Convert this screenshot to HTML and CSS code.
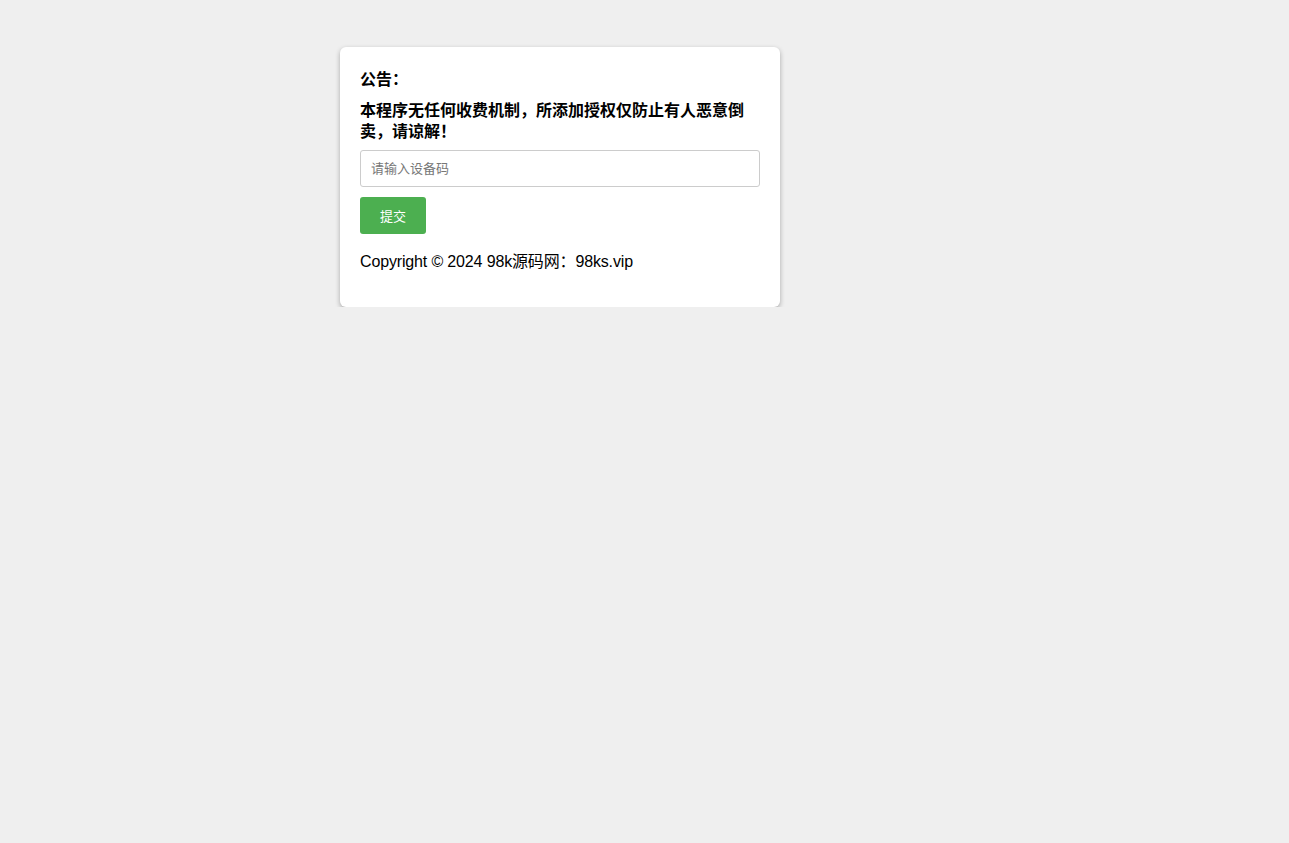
FILE: index.html
```html
<!DOCTYPE html>
<html lang="zh-CN">
<head>
<meta charset="utf-8">
<title>公告</title>
<link rel="stylesheet" href="styles.css">
</head>
<body>
<div class="card">
  <h3 class="title">公告：</h3>
  <p class="notice">本程序无任何收费机制，所添加授权仅防止有人恶意倒卖，请谅解！</p>
  <form class="form">
    <input class="input" type="text" placeholder="请输入设备码">
    <button class="btn" type="button">提交</button>
  </form>
  <p class="copyright">Copyright © 2024 98k源码网：98ks.vip</p>
</div>
</body>
</html>
```
FILE: styles.css
```css
html, body {
  margin: 0;
  padding: 0;
}
body {
  background: #efefef;
  font-family: "Liberation Sans", Arial, "Noto Sans CJK SC", sans-serif;
  color: #000;
}
.card {
  box-sizing: border-box;
  width: 440px;
  margin: 47px 0 0 340px;
  padding: 20px;
  background: #fff;
  border-radius: 6px;
  box-shadow: 0 2px 5px rgba(0, 0, 0, 0.3);
}
.title {
  margin: 0 0 10px;
  font-size: 16px;
  line-height: 22px;
  font-weight: bold;
  font-family: "Noto Sans CJK SC", sans-serif;
}
.notice {
  margin: 0 0 9px;
  font-size: 16px;
  line-height: 21px;
  font-weight: bold;
  font-family: "Noto Sans CJK SC", sans-serif;
}
.form {
  display: flex;
  flex-direction: column;
  align-items: flex-start;
  gap: 10px;
}
.input {
  box-sizing: border-box;
  width: 400px;
  height: 37px;
  margin: 0;
  padding: 0 10px;
  border: 1px solid #ccc;
  border-radius: 3px;
  font-size: 13px;
  font-family: "Liberation Sans", Arial, "Noto Sans CJK SC", sans-serif;
  outline: none;
}
.input::placeholder {
  color: #777;
}
.btn {
  box-sizing: border-box;
  height: 37px;
  margin: 0;
  padding: 0 20px;
  border: none;
  border-radius: 3px;
  background: #4caf50;
  color: #fff;
  font-size: 13px;
  font-family: "Liberation Sans", Arial, "Noto Sans CJK SC", sans-serif;
  cursor: pointer;
}
.copyright {
  margin: 19px 0 16px;
  font-size: 16px;
  line-height: 18px;
  letter-spacing: -0.15px;
}
```
